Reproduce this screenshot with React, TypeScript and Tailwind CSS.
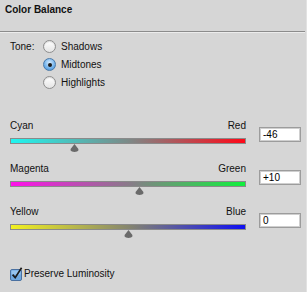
import React from "react";

const sliders = [
  { left: "Cyan", right: "Red", value: -46, grad: "bg-[linear-gradient(to_right,#1ff6f0,#7c8a88_50%,#ff0818)]" },
  { left: "Magenta", right: "Green", value: 10, grad: "bg-[linear-gradient(to_right,#ff10ea,#8a7a8a_50%,#10f03c)]" },
  { left: "Yellow", right: "Blue", value: 0, grad: "bg-[linear-gradient(to_right,#f2f020,#86866e_50%,#1010f2)]" },
];

function Radio({ checked }: { checked?: boolean }) {
  return (
    <div
      className={
        checked
          ? "w-[13px] h-[13px] rounded-full border border-[#4a79a8] bg-[radial-gradient(circle_at_50%_35%,#d6ecff,#6fb0ea_60%,#3c86d0)] flex items-center justify-center"
          : "w-[13px] h-[13px] rounded-full border border-[#8e8e8e] bg-[linear-gradient(#ffffff,#e4e4e4)] shadow-[inset_0_1px_1px_rgba(0,0,0,0.15)]"
      }
    >
      {checked && <div className="w-[4px] h-[4px] rounded-full bg-[#1b1b1b]" />}
    </div>
  );
}

function Thumb() {
  return (
    <svg width="9" height="8" viewBox="0 0 9 8">
      <path d="M4.5 0 L7.2 3.4 Q9 4.8 8.4 6.6 Q7.6 8 4.5 8 Q1.4 8 0.6 6.6 Q0 4.8 1.8 3.4 Z" fill="#6a6a6a" />
    </svg>
  );
}

export default function App() {
  return (
    <div className="w-[307px] h-[292px] bg-[#d6d6d6] text-[10px] text-[#111] font-['Liberation_Sans',Arial,sans-serif] border-r border-[#e2e2e2] overflow-hidden">
      {/* Title */}
      <div className="h-[31px] pl-[5px] pt-[4px] font-bold leading-[12px]">Color Balance</div>
      <div className="w-[305px] h-[2px] border-t border-[#8c8c8c] border-b border-b-[#ececec]" />

      {/* Tone */}
      <div className="flex pl-[10px] pt-[7px]">
        <div className="w-[33px] leading-[13px]">Tone:</div>
        <div className="flex flex-col gap-[5px]">
          {["Shadows", "Midtones", "Highlights"].map((t) => (
            <div key={t} className="flex items-center gap-[5px] h-[13px]">
              <Radio checked={t === "Midtones"} />
              <span className="leading-[13px]">{t}</span>
            </div>
          ))}
        </div>
      </div>

      {/* Sliders */}
      <div className="pl-[10px] pt-[31px] flex flex-col gap-[11px]">
        {sliders.map((s) => (
          <div key={s.left} className="flex">
            <div className="w-[236px] flex flex-col">
              <div className="flex justify-between leading-[12px] h-[12px]">
                <span>{s.left}</span>
                <span>{s.right}</span>
              </div>
              <div className={`mt-[6px] h-[6px] border border-[#8a8a8a] ${s.grad}`} />
              <div className="relative h-[8px]">
                <div
                  className="absolute top-0"
                  style={{ left: `${((s.value + 100) / 200) * 234 + 1 - 4.5}px` }}
                >
                  <Thumb />
                </div>
              </div>
            </div>
            <div className="ml-[13px] mt-[7px] w-[42px] h-[15px] bg-white border border-[#9c9c9c] shadow-[inset_0_0_0_1px_#cfcfcf] pl-[3px] leading-[13px] text-black">
              {s.value > 0 ? `+${s.value}` : s.value}
            </div>
          </div>
        ))}
      </div>

      {/* Preserve Luminosity */}
      <div className="flex items-center pl-[10px] mt-[29px] gap-[1px]">
        <svg width="13" height="14" viewBox="0 0 13 14">
          <rect x="0.5" y="2.5" width="11" height="11" rx="1.5" fill="#6fa8e0" stroke="#4a70a0" />
          <rect x="1.5" y="3.5" width="9" height="4" fill="#a8d0f4" opacity="0.7" />
          <path d="M2.6 7.6 L5.2 10.6 L11.6 0.8" fill="none" stroke="#1a1a1a" strokeWidth="1.7" />
        </svg>
        <span className="leading-[12px]">Preserve Luminosity</span>
      </div>
    </div>
  );
}
